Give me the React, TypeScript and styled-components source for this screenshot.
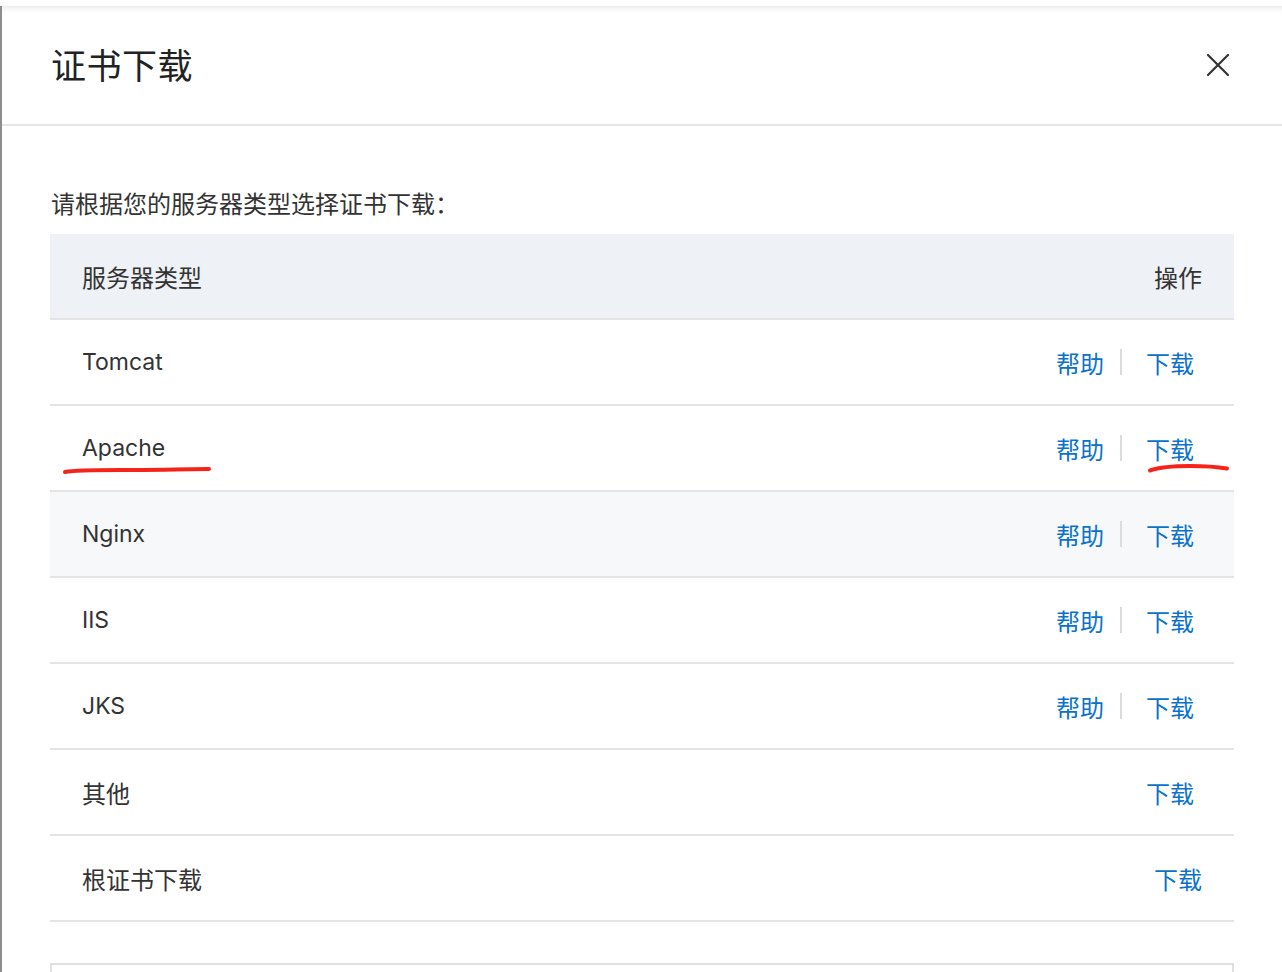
import React from "react";
import styled, { createGlobalStyle } from "styled-components";

const GlobalStyle = createGlobalStyle`
  html, body { margin: 0; padding: 0; background: #ffffff; }
  body {
    font-family: Inter, "Noto Sans CJK SC", sans-serif;
    color: #333333;
    overflow: hidden;
  }
  * { box-sizing: border-box; }
`;

const Page = styled.div`
  position: relative;
  width: 1282px;
  height: 972px;
  padding-top: 6px;
  display: flex;
  overflow: hidden;
  background: #ffffff;
`;

const EdgeStrip = styled.div`
  width: 2px;
  flex: none;
  background: #8d8d8d;
`;

const Panel = styled.div`
  flex: 1;
  display: flex;
  flex-direction: column;
  background: #ffffff;
  box-shadow: inset 0 7px 7px -6px rgba(0, 0, 0, 0.12);
`;

const Header = styled.div`
  height: 120px;
  flex: none;
  display: flex;
  align-items: center;
  justify-content: space-between;
  padding: 0 52px 4px 49px;
  border-bottom: 2px solid #e6e6e6;
`;

const Title = styled.h1`
  margin: 0;
  font-family: "Noto Sans CJK SC", sans-serif;
  font-size: 35px;
  font-weight: 400;
  color: #222222;
  letter-spacing: 0.5px;
`;

const CloseButton = styled.button`
  width: 24px;
  height: 24px;
  padding: 0;
  margin-top: 4px;
  border: none;
  background: transparent;
  display: flex;
  align-items: center;
  justify-content: center;
  cursor: pointer;
`;

const Body = styled.div`
  padding: 60px 48px 0 48px;
  display: flex;
  flex-direction: column;
`;

const Intro = styled.p`
  margin: 0 0 15px 0;
  font-family: "Noto Sans CJK SC", sans-serif;
  font-size: 24px;
  line-height: 33px;
  color: #333333;
  padding-left: 1px;
`;

const Table = styled.div`
  display: flex;
  flex-direction: column;
`;

const Row = styled.div<{ $head?: boolean; $hover?: boolean }>`
  height: 86px;
  display: flex;
  align-items: center;
  justify-content: space-between;
  padding: 0 32px;
  border-bottom: 2px solid #e4e4e4;
  background: ${(p) => (p.$head ? "#eef1f5" : p.$hover ? "#f7f8fa" : "#ffffff")};
`;

const NameCell = styled.div<{ $cjk?: boolean }>`
  font-family: ${(p) => (p.$cjk ? '"Noto Sans CJK SC", sans-serif' : 'Inter, "Noto Sans CJK SC", sans-serif')};
  font-size: ${(p) => (p.$cjk ? "24px" : "23px")};
  color: #333333;
`;

const HeadCell = styled.div`
  font-family: "Noto Sans CJK SC", sans-serif;
  font-size: 24px;
  color: #333333;
`;

const Actions = styled.div`
  display: flex;
  align-items: center;
`;

const Link = styled.a<{ $padded?: boolean }>`
  font-family: "Noto Sans CJK SC", sans-serif;
  font-size: 24px;
  color: #0a72c9;
  text-decoration: none;
  cursor: pointer;
  padding: ${(p) => (p.$padded ? "0 8px" : "0")};
`;

const Divider = styled.span`
  width: 2px;
  height: 26px;
  margin: 0 16px;
  background: #dcdcdc;
`;

const NextBox = styled.div`
  margin-top: 41px;
  height: 80px;
  border: 2px solid #e0e0e0;
  border-bottom: none;
`;

const Annotations = styled.svg`
  position: absolute;
  left: 0;
  top: 0;
  width: 1282px;
  height: 972px;
  pointer-events: none;
`;

type Item = { name: string; help: boolean; cjk?: boolean; root?: boolean; hover?: boolean };

const items: Item[] = [
  { name: "Tomcat", help: true },
  { name: "Apache", help: true },
  { name: "Nginx", help: true, hover: true },
  { name: "IIS", help: true },
  { name: "JKS", help: true },
  { name: "其他", help: false, cjk: true },
  { name: "根证书下载", help: false, cjk: true, root: true },
];

const CloseIcon = () => (
  <svg width="22" height="22" viewBox="0 0 22 22">
    <path d="M1 1 L21 21 M21 1 L1 21" stroke="#333" strokeWidth="2.2" strokeLinecap="round" fill="none" />
  </svg>
);

export default function App() {
  return (
    <>
      <GlobalStyle />
      <Page>
        <EdgeStrip />
        <Panel>
          <Header>
            <Title>证书下载</Title>
            <CloseButton aria-label="关闭">
              <CloseIcon />
            </CloseButton>
          </Header>
          <Body>
            <Intro>请根据您的服务器类型选择证书下载：</Intro>
            <Table>
              <Row $head>
                <HeadCell>服务器类型</HeadCell>
                <HeadCell>操作</HeadCell>
              </Row>
              {items.map((it) => (
                <Row key={it.name} $hover={it.hover}>
                  <NameCell $cjk={it.cjk}>{it.name}</NameCell>
                  <Actions>
                    {it.help && (
                      <>
                        <Link>帮助</Link>
                        <Divider />
                      </>
                    )}
                    <Link $padded={!it.root}>下载</Link>
                  </Actions>
                </Row>
              ))}
            </Table>
            <NextBox />
          </Body>
        </Panel>
        <Annotations viewBox="0 0 1282 972">
          <path
            d="M65 472 C 75 470, 90 470, 120 470 S 190 469, 209 469"
            stroke="#f5231a"
            strokeWidth="4"
            strokeLinecap="round"
            fill="none"
          />
          <path
            d="M1150 470.5 C 1160 467, 1172 466, 1190 466 S 1218 467, 1227 468.5"
            stroke="#f5231a"
            strokeWidth="4"
            strokeLinecap="round"
            fill="none"
          />
        </Annotations>
      </Page>
    </>
  );
}
